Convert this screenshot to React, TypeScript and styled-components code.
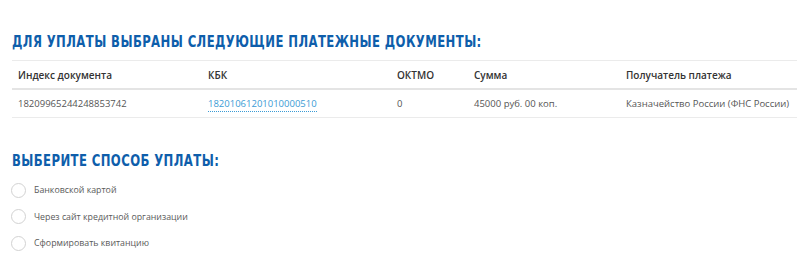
import React from 'react';
import styled, { createGlobalStyle } from 'styled-components';

const GlobalStyle = createGlobalStyle`
  html, body {
    margin: 0;
    padding: 0;
    background: #fff;
  }
  body {
    font-family: 'Open Sans', 'Liberation Sans', sans-serif;
  }
`;

const Page = styled.div`
  width: 800px;
  height: 265px;
  padding: 32px 3px 0 12px;
  box-sizing: border-box;
  overflow: hidden;
`;

const Title = styled.h2`
  margin: 0;
  font-family: 'DejaVu Sans Condensed', 'DejaVu Sans', sans-serif;
  font-weight: 700;
  font-size: 16px;
  line-height: 20px;
  color: #0e5eab;
  text-transform: uppercase;
  letter-spacing: 0.5px;
  white-space: nowrap;
  transform: scaleX(0.81);
  transform-origin: left center;
`;

const Table = styled.table`
  width: 785px;
  margin-top: 8px;
  table-layout: fixed;
  border-collapse: collapse;
  border-top: 1px solid #ebebeb;
`;

const Th = styled.th<{ $w?: number }>`
  text-align: left;
  font-size: 10px;
  font-weight: 600;
  color: #333;
  height: 27px;
  padding: 0 6px;
  border-bottom: 2px solid #e4e4e4;
  white-space: nowrap;
  width: ${({ $w }) => ($w ? `${$w}px` : 'auto')};
`;

const Td = styled.td`
  font-size: 9.5px;
  color: #555;
  height: 27px;
  padding: 0 6px;
  border-bottom: 1px solid #ebebeb;
  white-space: nowrap;
`;

const KbkLink = styled.a`
  color: #3b9bd5;
  text-decoration: none;
  border-bottom: 1px dotted #3b9bd5;
  padding-bottom: 1px;
`;

const Section = styled.div`
  margin-top: 33px;
`;

const Options = styled.div`
  display: flex;
  flex-direction: column;
  gap: 10.5px;
  margin-top: 11px;
`;

const Option = styled.label`
  display: flex;
  align-items: center;
  gap: 8px;
  height: 16px;
  font-size: 8.8px;
  color: #5a5a5a;
  cursor: pointer;
`;

const Radio = styled.span`
  width: 13px;
  height: 13px;
  margin-left: -1px;
  border: 1px solid #d2d2d2;
  border-radius: 50%;
  background: #fff;
  flex-shrink: 0;
`;

const methods = ['Банковской картой', 'Через сайт кредитной организации', 'Сформировать квитанцию'];

export default function App() {
  return (
    <Page>
      <GlobalStyle />
      <Title>Для уплаты выбраны следующие платежные документы:</Title>
      <Table>
        <thead>
          <tr>
            <Th $w={178}>Индекс документа</Th>
            <Th $w={177}>КБК</Th>
            <Th $w={65}>ОКТМО</Th>
            <Th $w={140}>Сумма</Th>
            <Th>Получатель платежа</Th>
          </tr>
        </thead>
        <tbody>
          <tr>
            <Td>18209965244248853742</Td>
            <Td>
              <KbkLink href="#">18201061201010000510</KbkLink>
            </Td>
            <Td>0</Td>
            <Td>45000 руб. 00 коп.</Td>
            <Td>Казначейство России (ФНС России)</Td>
          </tr>
        </tbody>
      </Table>
      <Section>
        <Title>Выберите способ уплаты:</Title>
        <Options>
          {methods.map((m) => (
            <Option key={m}>
              <Radio />
              {m}
            </Option>
          ))}
        </Options>
      </Section>
    </Page>
  );
}
